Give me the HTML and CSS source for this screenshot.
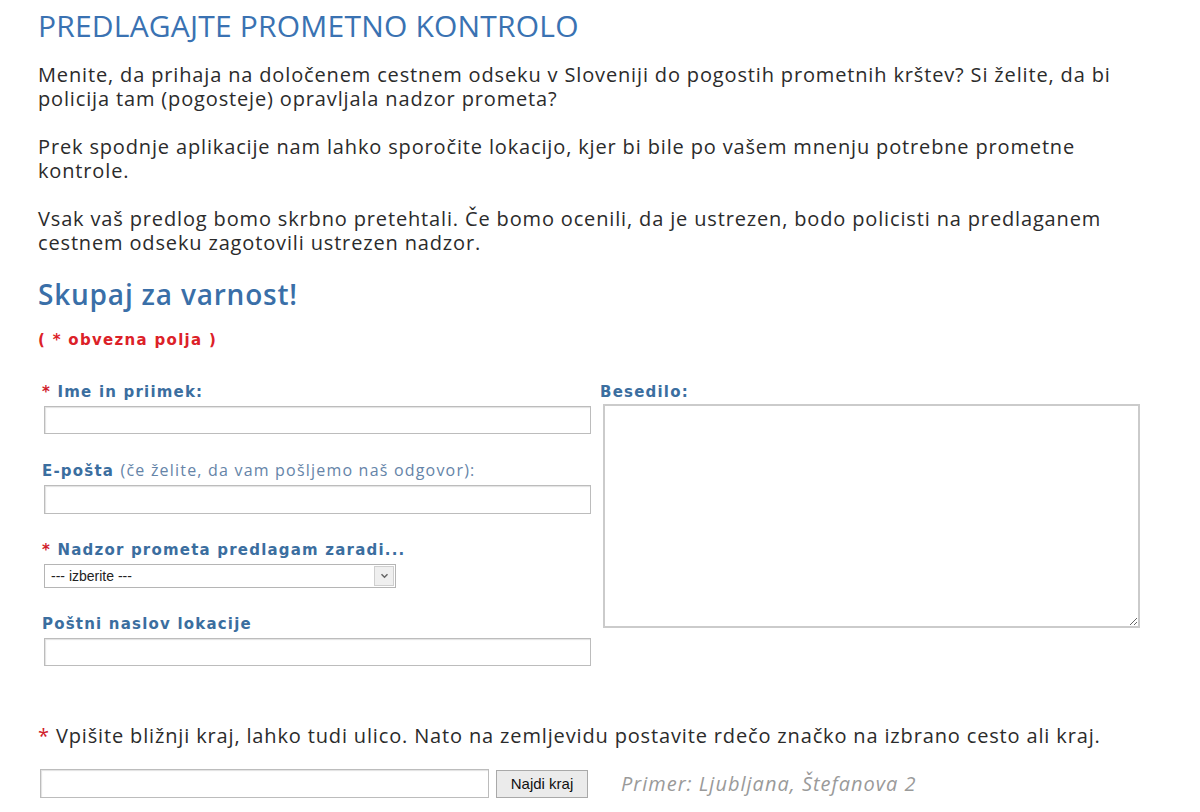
FILE: index.html
```html
<!DOCTYPE html>
<html>
  <head>
    <meta charset="UTF-8" />
    <title>Predlagajte prometno kontrolo</title>
    <link rel="stylesheet" href="styles.css">
  </head>
  <body>
    <div class="page">
      <h1>PREDLAGAJTE PROMETNO KONTROLO</h1>

      <p>Menite, da prihaja na določenem cestnem odseku v Sloveniji do pogostih prometnih krštev? Si želite, da bi policija tam (pogosteje) opravljala nadzor prometa?</p>
      <p>Prek spodnje aplikacije nam lahko sporočite lokacijo, kjer bi bile po vašem mnenju potrebne prometne kontrole.</p>
      <p>Vsak vaš predlog bomo skrbno pretehtali. Če bomo ocenili, da je ustrezen, bodo policisti na predlaganem cestnem odseku zagotovili ustrezen nadzor.</p>

      <h2>Skupaj za varnost!</h2>
      <div class="required-note">( * obvezna polja )</div>

      <form class="suggest-form">
        <div class="col-left">
          <div class="field">
            <label for="name"><span class="star">*</span> Ime in priimek:</label>
            <input type="text" id="name" class="input-name" />
          </div>
          <div class="field">
            <label for="email">E-pošta <span class="hint">(če želite, da vam pošljemo naš odgovor):</span></label>
            <input type="text" id="email" class="input-email" />
          </div>
          <div class="field">
            <label for="reason"><span class="star">*</span> Nadzor prometa predlagam zaradi...</label>
            <div class="select-box" id="reason">
              <span class="select-text">--- izberite ---</span>
              <span class="select-arrow">
                <svg width="9" height="6" viewBox="0 0 9 6"><path d="M1.5 1.2l3 3 3-3" fill="none" stroke="#666" stroke-width="1.5"/></svg>
              </span>
            </div>
          </div>
          <div class="field">
            <label for="address">Poštni naslov lokacije</label>
            <input type="text" id="address" class="input-name" />
          </div>
        </div>
        <div class="col-right">
          <label for="text">Besedilo:</label>
          <textarea id="text"></textarea>
        </div>
      </form>

      <p class="place-note"><span class="star">*</span> Vpišite bližnji kraj, lahko tudi ulico. Nato na zemljevidu postavite rdečo značko na izbrano cesto ali kraj.</p>

      <div class="search-row">
        <input type="text" class="place-input" />
        <button type="button" class="find-button">Najdi kraj</button>
        <span class="example">Primer: Ljubljana, Štefanova 2</span>
      </div>
    </div>
  </body>
</html>
```

FILE: styles.css
```css
body {
  margin: 0;
  background-color: #fff;
  color: #2b2b2b;
  font-family: "Open Sans", "DejaVu Sans", sans-serif;
}

.page {
  padding: 8px 38px 0 38px;
}

h1 {
  margin: 0;
  font-size: 30px;
  font-weight: normal;
  color: #3a72b2;
  line-height: 36px;
  letter-spacing: 0.2px;
}

p {
  margin: 24px 0 0 0;
  font-size: 20px;
  letter-spacing: 0.85px;
  line-height: 24px;
  width: 1090px;
}

h1 + p {
  margin-top: 19px;
}

h2 {
  margin: 22px 0 0 0;
  font-size: 28px;
  font-weight: 600;
  color: #3a6fa8;
  line-height: 34px;
  letter-spacing: 0.8px;
}

.required-note {
  margin-top: 19px;
  color: #dc2128;
  font-weight: bold;
  font-size: 15px;
  line-height: 20px;
  letter-spacing: 1.3px;
  font-family: "DejaVu Sans", sans-serif;
}

.star {
  color: #d0202a;
}

.suggest-form {
  display: flex;
  margin-top: 33px;
}

.col-left {
  width: 558px;
}

.field {
  margin-bottom: 27px;
}

.field:last-child {
  margin-bottom: 0;
}

label {
  display: block;
  padding-left: 4px;
  font-family: "DejaVu Sans", sans-serif;
  font-weight: bold;
  font-size: 15px;
  letter-spacing: 1.2px;
  color: #3b6e9f;
  line-height: 18px;
}

.hint {
  font-family: "Open Sans", sans-serif;
  font-weight: normal;
  font-size: 16px;
  letter-spacing: 1.2px;
  color: #6584a8;
}

.field input {
  display: block;
  box-sizing: border-box;
  margin: 5px 0 0 6px;
  width: 547px;
  height: 28px;
  border: 1px solid #bcbcbc;
  box-shadow: inset 1px 1px 1px #e2e2e2;
}

.field .input-email {
  height: 29px;
}

.select-box {
  display: flex;
  align-items: center;
  justify-content: space-between;
  box-sizing: border-box;
  margin: 5px 0 0 6px;
  width: 352px;
  height: 24px;
  border: 1px solid #b5b5b5;
  padding-left: 6px;
  font-family: "Liberation Sans", sans-serif;
  font-size: 14px;
  color: #222;
}

.select-arrow {
  display: flex;
  align-items: center;
  justify-content: center;
  width: 20px;
  height: 20px;
  margin-right: 1px;
  border: 1px solid #cfcfcf;
  background-color: #efefef;
  box-sizing: border-box;
}

.col-right {
  width: 545px;
}

textarea {
  display: block;
  box-sizing: border-box;
  margin: 3px 0 0 7px;
  width: 537px;
  height: 224px;
  border: 2px solid #cbcbcb;
  resize: both;
}

.place-note {
  margin-top: 58px;
}

.search-row {
  display: flex;
  align-items: center;
  margin-top: 21px;
}

.place-input {
  box-sizing: border-box;
  margin: 0 0 0 2px;
  width: 449px;
  height: 29px;
  border: 1px solid #bcbcbc;
  box-shadow: inset 1px 1px 1px #e2e2e2;
}

.find-button {
  box-sizing: border-box;
  margin-left: 7px;
  width: 92px;
  height: 28px;
  padding: 0;
  font-family: "Liberation Sans", sans-serif;
  font-size: 15px;
  color: #111;
  background-color: #ebebeb;
  border: 1px solid #a9a9a9;
}

.example {
  margin-left: 33px;
  font-style: italic;
  color: #9a9a9a;
  font-size: 20px;
  letter-spacing: 1px;
}
```
